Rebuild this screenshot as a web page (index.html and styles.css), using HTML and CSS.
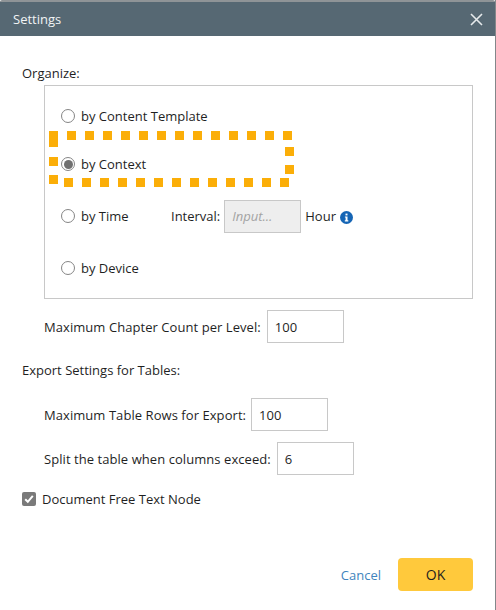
FILE: index.html
```html
<!DOCTYPE html>
<html lang="en">

<head>
  <meta charset="UTF-8">
  <title>Settings</title>
  <link rel="stylesheet" href="styles.css">
</head>

<body>
  <div class="dialog">
    <div class="header">
      <span class="title">Settings</span>
      <svg class="close" width="13" height="13" viewBox="0 0 13 13">
        <path d="M1 1L12 12M12 1L1 12" stroke="#e6eaec" stroke-width="1.6" fill="none" />
      </svg>
    </div>

    <div class="content">
      <div class="section-label organize">Organize:</div>
      <div class="organize-box">
        <div class="radio-row first">
          <span class="radio"></span><span>by Content Template</span>
        </div>
        <div class="radio-row second">
          <span class="radio checked"></span><span>by Context</span>
        </div>
        <div class="radio-row third">
          <span class="radio"></span><span class="time-label">by Time</span>
          <span>Interval:</span>
          <span class="input disabled">Input...</span>
          <span>Hour</span>
          <svg class="info" width="13" height="13" viewBox="0 0 13 13">
            <circle cx="6.5" cy="6.5" r="6.5" fill="#1565b5" />
            <rect x="5.5" y="2.6" width="2" height="1.8" fill="#fff" />
            <path d="M4.9 5.4H7.5V9.3H8.3V10.4H4.8V9.3H5.6V6.5H4.9Z" fill="#fff" />
          </svg>
        </div>
        <div class="radio-row fourth">
          <span class="radio"></span><span>by Device</span>
        </div>
      </div>

      <div class="field chapter">
        <span class="field-label">Maximum Chapter Count per Level:</span>
        <span class="input">100</span>
      </div>

      <div class="section-label export">Export Settings for Tables:</div>

      <div class="field rows">
        <span class="field-label">Maximum Table Rows for Export:</span>
        <span class="input">100</span>
      </div>
      <div class="field split">
        <span class="field-label">Split the table when columns exceed:</span>
        <span class="input">6</span>
      </div>

      <div class="check-row">
        <svg class="checkbox" width="14" height="14" viewBox="0 0 14 14">
          <rect width="14" height="14" rx="2" fill="#7a7a7a" />
          <path d="M3.2 7.2L5.8 9.8L10.8 3.8" stroke="#fff" stroke-width="2" fill="none" />
        </svg>
        <span>Document Free Text Node</span>
      </div>
    </div>

    <div class="footer">
      <span class="cancel">Cancel</span>
      <span class="ok">OK</span>
    </div>

    <!-- highlight drawn over the by Context row -->
    <svg class="highlight" width="248" height="58" viewBox="0 0 248 58">
      <g fill="#fbae08">
        <rect x="0" y="0" width="9" height="16" />
        <rect x="0" y="26" width="9" height="9" />
        <rect x="0" y="44" width="9" height="9" />
        <path d="M18 0h9v9h-9zM36 0h9v9h-9zM54 0h9v9h-9zM72 0h9v9h-9zM90 0h9v9h-9zM108 0h9v9h-9zM126 0h9v9h-9zM144 0h9v9h-9zM162 0h9v9h-9zM180 0h9v9h-9zM198 0h9v9h-9zM216 0h9v9h-9zM234 0h9v9h-9z" />
        <path d="M15 47h9v9h-9zM33 47h9v9h-9zM51 47h9v9h-9zM69 47h9v9h-9zM87 47h9v9h-9zM105 47h9v9h-9zM123 47h9v9h-9zM141 47h9v9h-9zM159 47h9v9h-9zM177 47h9v9h-9zM195 47h9v9h-9zM213 47h9v9h-9zM231 47h9v9h-9z" />
        <rect x="236" y="16" width="9" height="9" />
        <rect x="236" y="34" width="9" height="9" />
      </g>
    </svg>
  </div>
</body>

</html>
```

FILE: styles.css
```css
* {
  box-sizing: border-box;
}

html,
body {
  margin: 0;
  height: 100%;
  background: #83878a;
}

body {
  font-family: "Open Sans", sans-serif;
  font-size: 13px;
  color: #1f1f1f;
}

.dialog {
  position: relative;
  display: flex;
  flex-direction: column;
  width: 495px;
  height: 610px;
  background: #fff;
}

.header {
  display: flex;
  align-items: center;
  justify-content: space-between;
  height: 36px;
  padding: 0 12px 0 13px;
  background: #566873;
  border-top: 2px solid #8f9497;
  border-radius: 2px 2px 0 0;
  color: #f1f3f4;
}

.content {
  flex: 1;
  padding-left: 22px;
}

.section-label {
  display: flex;
  align-items: center;
  height: 18px;
}

.organize {
  margin-top: 28px;
}

.organize-box {
  width: 429px;
  height: 214px;
  margin: 3px 0 0 22px;
  padding-left: 16px;
  border: 1px solid #c8c8c8;
}

.radio-row {
  display: flex;
  align-items: center;
  height: 18px;
}

.radio-row.first {
  margin-top: 21px;
}

.radio-row.second {
  margin-top: 30px;
}

.radio-row.third {
  margin-top: 34px;
}

.radio-row.fourth {
  margin-top: 34px;
}

.radio {
  flex: none;
  width: 14px;
  height: 14px;
  margin-right: 6px;
  background: #fff;
  border: 1.5px solid #858585;
  border-radius: 50%;
}

.radio.checked {
  padding: 1.5px;
  background: #707070;
  background-clip: content-box;
}

.time-label {
  width: 90px;
}

.input {
  display: flex;
  align-items: center;
  flex: none;
  width: 77px;
  height: 33px;
  margin-left: 4px;
  padding-left: 7px;
  border: 1px solid #c8c8c8;
  background: #fff;
}

.input.disabled {
  margin-right: 4px;
  background: #eee;
  color: #a3a3a3;
  font-style: italic;
}

.info {
  margin: 2px 0 0 4px;
}

.field {
  display: flex;
  align-items: center;
  height: 33px;
  margin-left: 22px;
}

.field-label {
  letter-spacing: .06px;
}

.field .input {
  margin-left: 6px;
}

.field.rows .input {
  margin-left: 5px;
}

.chapter {
  margin-top: 11px;
}

.export {
  margin-top: 18px;
}

.rows {
  margin-top: 19px;
}

.split {
  margin-top: 11px;
}

.check-row {
  display: flex;
  align-items: center;
  height: 18px;
  margin-top: 15px;
}

.checkbox {
  margin-right: 6px;
}

.footer {
  display: flex;
  align-items: center;
  justify-content: flex-end;
  gap: 17px;
  height: 33px;
  margin: 0 22px 19px 0;
}

.cancel {
  color: #3f84bd;
}

.ok {
  display: flex;
  align-items: center;
  justify-content: center;
  width: 75px;
  height: 33px;
  background: #ffc93c;
  border-radius: 4px;
  font-size: 14px;
}

.highlight {
  position: absolute;
  left: 49px;
  top: 131px;
}
```
